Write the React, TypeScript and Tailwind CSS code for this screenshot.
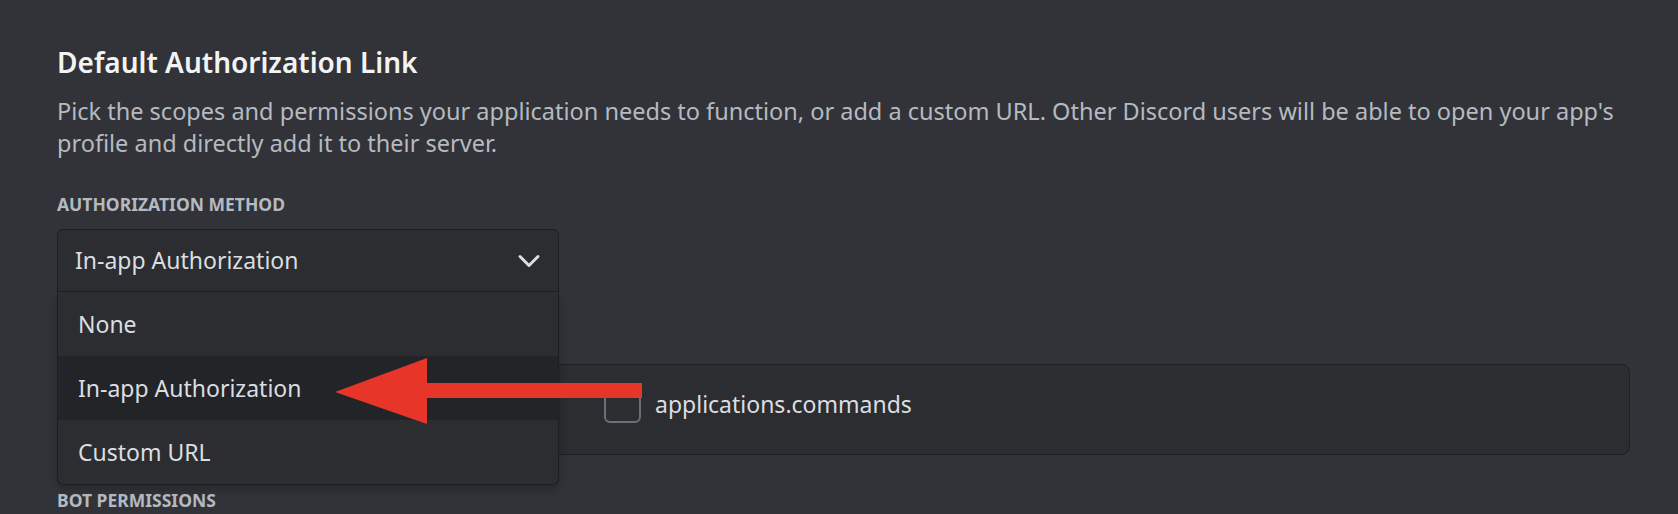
const options = ['None', 'In-app Authorization', 'Custom URL'];

function Chevron() {
  return (
    <svg width="36" height="36" viewBox="0 0 24 24" fill="none" stroke="#dbdee1" strokeWidth="2" strokeLinecap="round" strokeLinejoin="round">
      <path d="M6 9l6 6 6-6" />
    </svg>
  );
}

function Arrow() {
  // red annotation arrow drawn over the dropdown
  return (
    <svg
      className="pointer-events-none absolute left-[335px] top-[358px] z-20"
      width="307"
      height="66"
      viewBox="0 0 307 66"
    >
      <rect x="90" y="25" width="217" height="15" fill="#e8352a" />
      <polygon points="0,34 92,0 92,66" fill="#e8352a" />
    </svg>
  );
}

export default function App() {
  return (
    <div className="relative h-[514px] w-[1678px] overflow-hidden bg-[#313338] font-['Noto_Sans',sans-serif]">
      <section className="pl-[57px] pr-[48px] pt-[44px]">
        <h2 className="text-[28px] font-semibold leading-[36px] text-[#f2f3f5]">
          Default Authorization Link
        </h2>
        <p className="mt-[15px] text-[23.5px] leading-[32px] text-[#b5bac1]">
          Pick the scopes and permissions your application needs to function, or add a custom URL. Other Discord users will be able to open your app's profile and directly add it to their server.
        </p>

        <h3 className="mt-[34px] text-[17.5px] font-bold uppercase leading-[22px] text-[#b5bac1]">
          Authorization Method
        </h3>
        <div className="relative z-10 mt-[14px] w-[502px]">
          <button
            type="button"
            className="flex h-[63px] w-full items-center justify-between rounded-t-[6px] border border-[#1e1f22] bg-[#2b2d31] pl-[17px] pr-[11px] text-[23px] text-[#dbdee1]"
          >
            In-app Authorization
            <Chevron />
          </button>
          <ul className="absolute left-0 right-0 top-full overflow-hidden rounded-b-[6px] border border-t-0 border-[#1e1f22] bg-[#2b2d31] shadow-[0_4px_8px_rgba(0,0,0,0.25)]">
            {options.map((o) => (
              <li
                key={o}
                className={
                  o === 'In-app Authorization'
                    ? 'flex h-[64px] items-center bg-[#232428] px-[20px] text-[23px] text-[#dbdee1]'
                    : 'flex h-[64px] items-center px-[20px] text-[23px] text-[#dbdee1]'
                }
              >
                {o}
              </li>
            ))}
          </ul>
        </div>

        {/* scopes box; its first column sits under the open dropdown */}
        <div className="mt-[72px] flex h-[91px] items-center rounded-[8px] border border-[#1e1f22] bg-[#2b2d31] pb-[10px] pl-[546px]">
          <label className="flex items-center gap-[14px] text-[23px] text-[#dbdee1]">
            <span className="h-[36px] w-[37px] rounded-[6px] border-2 border-[#6d6f78]" />
            applications.commands
          </label>
        </div>

        <h3 className="mt-[34px] text-[17.5px] font-bold uppercase leading-[22px] text-[#b5bac1]">
          Bot Permissions
        </h3>
      </section>
      <Arrow />
    </div>
  );
}
